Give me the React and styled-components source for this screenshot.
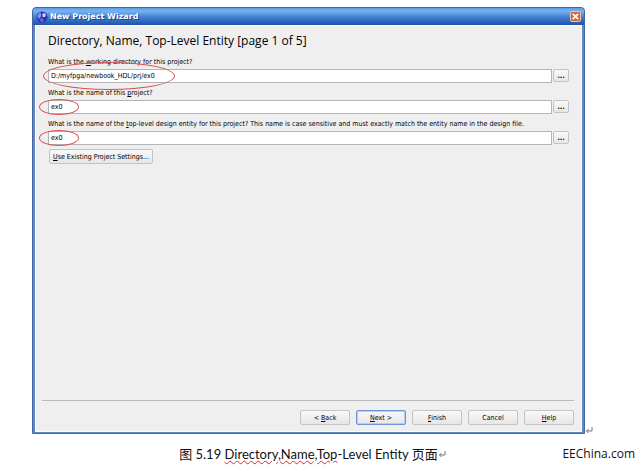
import React, { useState } from 'react';
import styled, { createGlobalStyle } from 'styled-components';

function ReturnMark() {
  return (
    <MarkIcon viewBox="0 0 8 8" aria-hidden="true">
      <path d="M7 1V5H1.5M3.5 3L1.5 5L3.5 7" />
    </MarkIcon>
  )
}

function WizardIcon() {
  return (
    <AppIcon viewBox="0 0 12 12" aria-hidden="true">
      <circle cx="6" cy="6" r="5.5" fill="#3136b8" />
      <path d="M1 5L4 1L6 4L3 8Z" fill="#7f97ee" />
      <path d="M6 2L10 3L9 6L6 6Z" fill="#d6d8ff" />
      <path d="M5 7L8 7L7 11L4 10Z" fill="#7a63da" />
      <path d="M6 1V6L9 9" stroke="#171a7c" fill="none" />
    </AppIcon>
  )
}

function Field({ id, label, value, onChange, ring }) {
  return (
    <FieldBlock>
      <Label htmlFor={id}>{label}</Label>
      <FieldRow>
        <TextInput id={id} value={value} onChange={e => onChange(e.target.value)} />
        <BrowseButton type="button" aria-label="Browse">...</BrowseButton>
        <Ring $wide={ring === 'wide'} />
      </FieldRow>
    </FieldBlock>
  )
}

function App() {
  const [directory, setDirectory] = useState('D:/myfpga/newbook_HDL/prj/ex0');
  const [project, setProject] = useState('ex0');
  const [entity, setEntity] = useState('ex0');

  return (
    <>
      <GlobalStyle />
      <Page>
        <Figure>
          <Dialog>
            <TitleBar>
              <WizardIcon />
              <WindowTitle>New Project Wizard</WindowTitle>
              <CloseButton type="button" aria-label="Close">
                <svg viewBox="0 0 10 10"><path d="M2 2L8 8M8 2L2 8" /></svg>
              </CloseButton>
            </TitleBar>
            <Body>
              <Heading>Directory, Name, Top-Level Entity [page 1 of 5]</Heading>
              <Form>
                <Field
                  id="directory"
                  label={<>What is the <u>w</u>orking directory for this project?</>}
                  value={directory}
                  onChange={setDirectory}
                  ring="wide"
                />
                <Field
                  id="project"
                  label={<>What is the name of this <u>p</u>roject?</>}
                  value={project}
                  onChange={setProject}
                />
                <Field
                  id="entity"
                  label={<>What is the name of the <u>t</u>op-level design entity for this project? This name is case sensitive and must exactly match the entity name in the design file.</>}
                  value={entity}
                  onChange={setEntity}
                />
                <SettingsButton type="button"><u>U</u>se Existing Project Settings...</SettingsButton>
              </Form>
              <Actions>
                <ActionButton type="button">&lt; <u>B</u>ack</ActionButton>
                <ActionButton type="button" $primary><u>N</u>ext &gt;</ActionButton>
                <ActionButton type="button"><u>F</u>inish</ActionButton>
                <ActionButton type="button">Cancel</ActionButton>
                <ActionButton type="button"><u>H</u>elp</ActionButton>
              </Actions>
            </Body>
          </Dialog>
          <ReturnMark />
        </Figure>
        <Caption>
          <span><Cjk>图</Cjk> 5.19 <Misspelt>Directory,Name,Top</Misspelt>-Level Entity <Cjk>页面</Cjk></span>
          <ReturnMark />
        </Caption>
        <Watermark>EEChina.com</Watermark>
      </Page>
    </>
  )
}

const GlobalStyle = createGlobalStyle`
  * {
    box-sizing: border-box;
  }
  body {
    margin: 0;
    background: #fff;
  }
`

const Page = styled.main`
  position: relative;
  display: flex;
  flex-direction: column;
  min-height: 100vh;
  padding: 7px 50px 0 32px;
`

const Figure = styled.div`
  flex: 1;
  display: flex;
  align-items: flex-end;
`

const MarkIcon = styled.svg`
  flex: none;
  width: 8px;
  height: 8px;
  fill: none;
  stroke: #777;
`

const Dialog = styled.section`
  flex: 1;
  align-self: stretch;
  display: flex;
  flex-direction: column;
  min-width: 0;
  border: 1px solid #48659c;
  border-radius: 4px 4px 0 0;
  background: #5f88c8;
  color: #000;
  font-family: 'DejaVu Sans Condensed', 'DejaVu Sans', sans-serif;
  font-size: 7px;
  text-rendering: geometricPrecision;
  overflow: hidden;
`

const TitleBar = styled.header`
  display: flex;
  align-items: center;
  gap: 2px;
  height: 17px;
  padding: 0 3px 0 3px;
  background: linear-gradient(#5b9be4 0, #76b4f2 3px, #4a88d8 8px, #2457b2 16px);
`

const AppIcon = styled.svg`
  width: 12px;
  height: 12px;
`

const WindowTitle = styled.h1`
  flex: 1;
  margin: 0;
  color: #fff;
  font-family: 'DejaVu Sans', sans-serif;
  font-size: 8px;
  font-weight: bold;
  line-height: 14px;
  text-shadow: 1px 1px #1d4791;
`

const CloseButton = styled.button`
  width: 11px;
  height: 11px;
  padding: 0;
  border: 1px solid #e9c0b2;
  border-radius: 2px;
  background: #d5623c;
  svg {
    display: block;
    width: 9px;
    height: 9px;
    stroke: #fff;
    stroke-width: 2;
  }
`

const Body = styled.div`
  flex: 1;
  display: flex;
  flex-direction: column;
  margin: 0 2px 1px;
  padding: 7px 7px 6px 6px;
  border: 1px solid #f8fbff;
  background: #efefef;
`

const Heading = styled.h2`
  margin: 0 0 7px;
  padding-left: 6px;
  font-family: 'Open Sans', sans-serif;
  font-size: 12px;
  font-weight: normal;
  line-height: 16px;
  text-rendering: auto;
  color: #000;
`

const Form = styled.form`
  flex: 1;
  display: flex;
  flex-direction: column;
  align-items: flex-start;
  padding: 0 5px 0 6px;
`

const FieldBlock = styled.div`
  width: 100%;
  margin-bottom: 4px;
`

const Label = styled.label`
  display: block;
  line-height: 12px;
  margin-bottom: 1px;
  white-space: nowrap;
`

const FieldRow = styled.div`
  position: relative;
  display: flex;
  gap: 1px;
`

const TextInput = styled.input`
  flex: 1;
  min-width: 0;
  height: 14px;
  padding: 0 2px;
  border: 1px solid #b5b5b5;
  background: #fff;
  color: #000;
  font: inherit;
  text-rendering: inherit;
  outline: none;
`

const Button = styled.button`
  padding: 0;
  border: 1px solid ${props => props.$primary ? '#6f93d6' : '#c3c3c3'};
  border-radius: 2px;
  background: linear-gradient(#f9f9f9, #e6e6e6);
  box-shadow: ${props => props.$primary ? 'inset 0 0 0 1px #b9cdf3' : 'none'};
  color: #000;
  font: inherit;
  text-rendering: inherit;
  line-height: 12px;
  white-space: nowrap;
`

const BrowseButton = styled(Button)`
  width: 16px;
  height: 13px;
  font-weight: bold;
  line-height: 8px;
`

const SettingsButton = styled(Button)`
  height: 15px;
  padding: 0 3px;
  margin-left: 1px;
`

/* red pen mark round the typed value */
const Ring = styled.span`
  position: absolute;
  left: ${props => props.$wide ? '-5px' : '-9px'};
  top: ${props => props.$wide ? '-7px' : '-1px'};
  width: ${props => props.$wide ? '132px' : '40px'};
  height: ${props => props.$wide ? '28px' : '16px'};
  border: 1px solid #d9534f;
  border-radius: 50%;
  pointer-events: none;
`

const Actions = styled.div`
  display: flex;
  justify-content: flex-end;
  gap: 6px;
  padding-top: 9px;
  border-top: 1px solid #b8b8b8;
`

const ActionButton = styled(Button)`
  width: 50px;
  height: 15px;
`

const Caption = styled.p`
  display: flex;
  justify-content: center;
  align-items: center;
  margin: 0;
  padding: 11px 0 4px;
  font-family: Lato, 'Noto Sans CJK SC', sans-serif;
  font-size: 13px;
  line-height: 18px;
  color: #111;
  white-space: nowrap;
`

const Cjk = styled.span`
  font-family: 'Noto Sans CJK SC', sans-serif;
`

const Misspelt = styled.span`
  text-decoration: underline wavy #e0282e 1px;
  text-underline-offset: 1px;
`

const Watermark = styled.span`
  position: absolute;
  right: 8px;
  bottom: 4px;
  font-family: 'Open Sans', sans-serif;
  font-size: 12px;
  line-height: 18px;
  color: #111;
`

export default App;
